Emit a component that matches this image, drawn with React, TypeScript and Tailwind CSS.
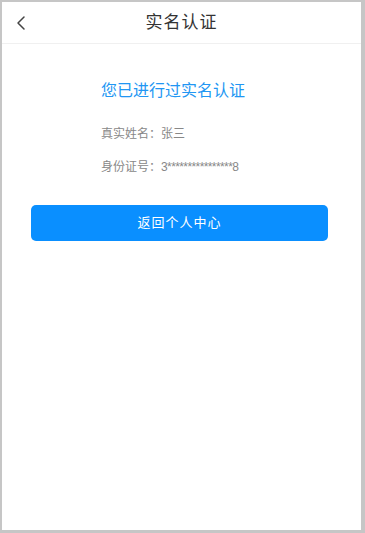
import { ChevronLeft } from 'lucide-react';

const font = { fontFamily: '"Liberation Sans", "Noto Sans CJK SC", sans-serif' };

export default function App() {
  return (
    <div className="w-[365px] h-[533px] bg-[#c6c6c6] pl-[2px] pt-[2px] pr-[4px] pb-[3px]" style={font}>
      <div className="w-full h-full bg-white flex flex-col">
        <div className="h-[42px] flex items-center relative border-b border-[#f0f0f0]">
          <ChevronLeft size={24} strokeWidth={1.5} className="absolute left-[7px] text-[#444]" />
          <div className="flex-1 text-center text-[17px] text-[#333] tracking-[1px]">实名认证</div>
        </div>
        <div className="pl-[99px] pt-[36px]">
          <div className="text-[16px] leading-[22px] text-[#2196f3]">您已进行过实名认证</div>
          <div className="mt-[24px] text-[12px] leading-[16px] text-[#888]">真实姓名：张三</div>
          <div className="mt-[17px] text-[12px] leading-[16px] text-[#888]">
            身份证号：<span className="tracking-[-0.6px]">3****************8</span>
          </div>
        </div>
        <div className="pl-[29px] pr-[33px] mt-[30px]">
          <button className="w-full h-[36px] rounded-[5px] bg-[#0a8fff] text-white text-[13px] tracking-[1px]">
            返回个人中心
          </button>
        </div>
      </div>
    </div>
  );
}
